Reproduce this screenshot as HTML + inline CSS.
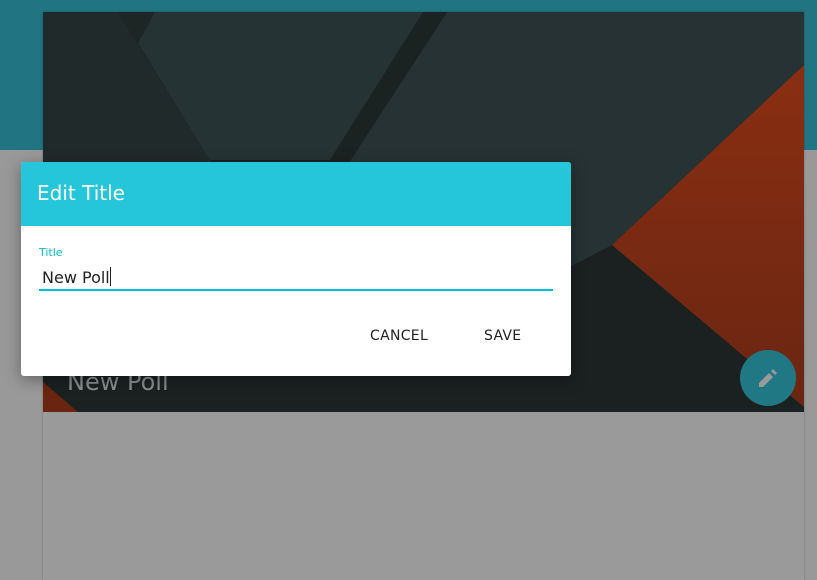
<!DOCTYPE html>
<html><head><style>
*{margin:0;padding:0;box-sizing:border-box}
body{width:817px;height:580px;overflow:hidden;background:#999;font-family:"DejaVu Sans","Liberation Sans",sans-serif;position:relative}
.top{position:absolute;left:0;top:0;width:817px;height:150px;background:#217582}
.card{position:absolute;left:43px;top:12px;width:761px;height:568px;background:#9a9a9a;box-shadow:0 0 2px rgba(0,0,0,.3)}
.dlg{position:absolute;left:21px;top:162px;width:550px;height:214px;background:#fff;border-radius:3px;box-shadow:0 4px 16px rgba(0,0,0,.35);overflow:hidden}
.hd{height:64px;background:#26c6da;color:#fff;font-size:20px;padding:19px 0 0 16px}
.lbl{position:absolute;left:18px;top:84px;font-size:11px;color:#00bcd4}
.inp{position:absolute;left:21px;top:105px;font-size:16px;color:#222}
.cur{display:inline-block;width:1px;height:19px;background:#222;vertical-align:-3px}
.ul{position:absolute;left:18px;top:127px;width:514px;height:2px;background:#00bcd4}
.btn{position:absolute;top:166px;font-size:14px;color:#222;letter-spacing:.3px}
</style></head><body>
<div class="top"></div>
<div class="card">
<svg width="761" height="400" style="position:absolute;left:0;top:0">
<defs><linearGradient id="o" x1="0" y1="0" x2="0" y2="1"><stop offset="0" stop-color="#8a2e12"/><stop offset="1" stop-color="#6a2612"/></linearGradient></defs>
<rect width="761" height="400" fill="#1b2121"/>
<polygon points="0,0 75,0 200,200 0,200" fill="#212a2a"/>
<polygon points="95,31 112,0 380,0 287,148 167,148" fill="#263334"/>
<polygon points="75,0 112,0 95,31" fill="#1d2525"/>
<polygon points="404,0 761,0 761,53 569,233 440,300 300,160" fill="#263233"/>
<polygon points="380,0 404,0 300,160 287,148" fill="#1b2222"/>
<polygon points="761,53 569,233 761,395" fill="url(#o)"/>
<polygon points="0,370 0,400 35,400" fill="#6a2510"/>
<text x="24" y="378" font-family="DejaVu Sans,sans-serif" font-size="24" fill="#8a9090">New Poll</text>
<circle cx="725" cy="366" r="28" fill="#217885"/>
<path d="M716 375v-4l10-10 4 4-10 10z M728 359l2-2 4 4-2 2z" fill="#9a9a9a"/>
</svg>
</div>
<div class="dlg">
<div class="hd">Edit Title</div>
<div class="lbl">Title</div>
<div class="inp">New Poll<span class="cur"></span></div>
<div class="ul"></div>
<div class="btn" style="left:349px">CANCEL</div>
<div class="btn" style="left:463px">SAVE</div>
</div>
</body></html>
